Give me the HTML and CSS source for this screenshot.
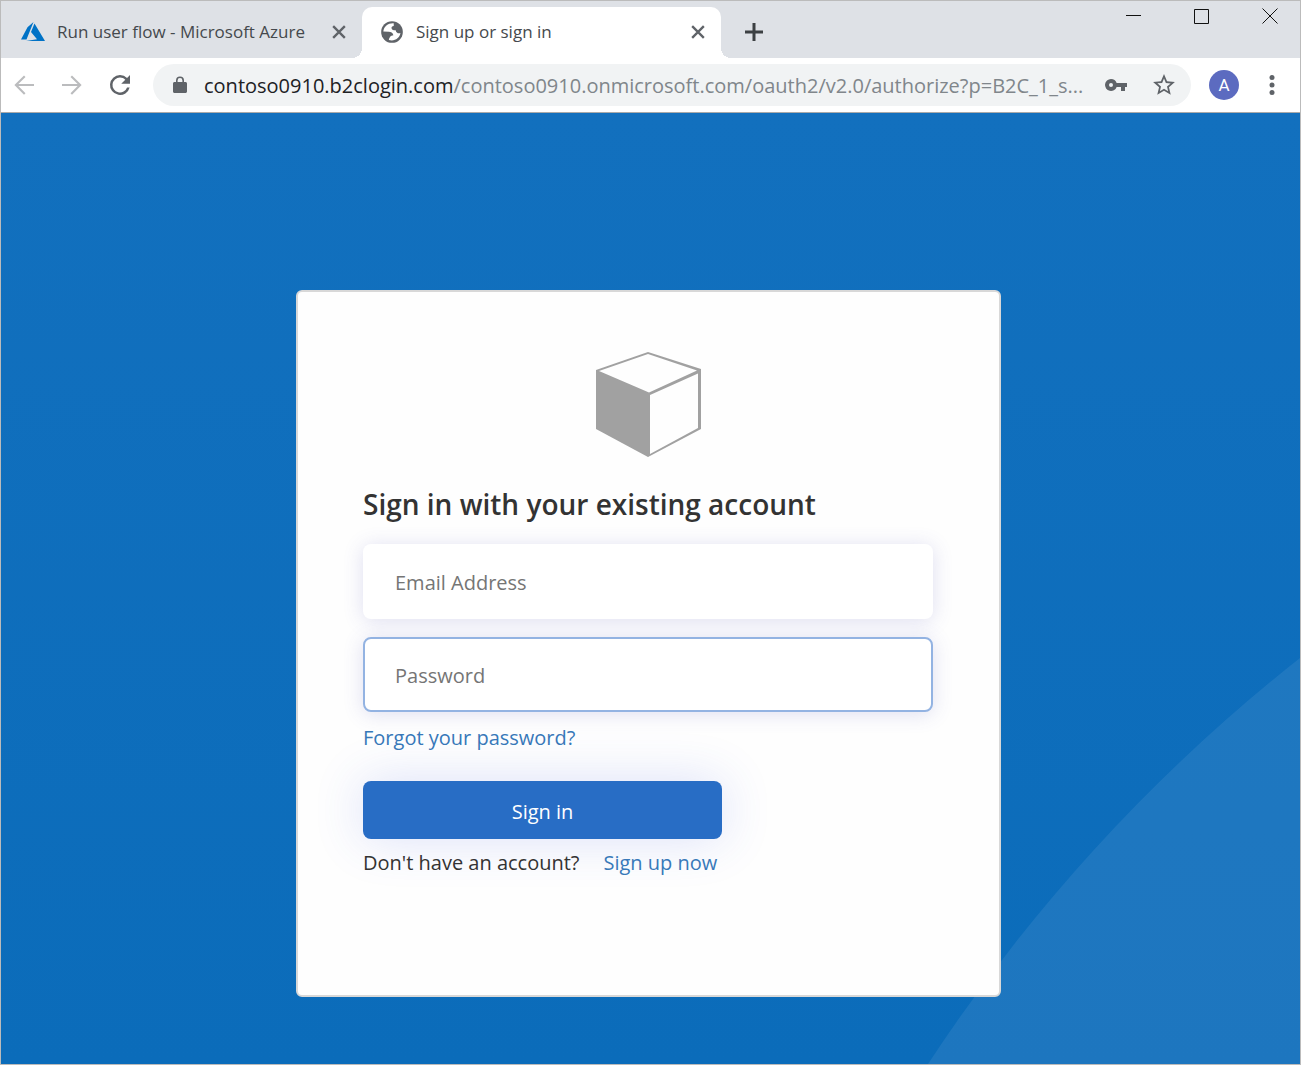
FILE: index.html
```html
<!DOCTYPE html>
<html lang="en">
<head>
<meta charset="utf-8">
<title>Sign up or sign in</title>
<link rel="stylesheet" href="styles.css">
</head>
<body>
<div class="window">
  <header class="chrome">
    <div class="tabs">
      <div class="tab">
        <svg class="favicon" viewBox="0 0 26 26"><path fill="#0072c6" d="M13.500 3 7.500 8.200 1 20.500h5.500zM14.500 4.500l-3.500 8.500 6 7.300-11 1.700h19z"/></svg>
        <span class="tab-title">Run user flow - Microsoft Azure</span>
        <button class="icon-button" aria-label="Close tab"><svg class="cross" viewBox="0 0 12 12"><path d="M1 1l10 10M11 1 1 11"/></svg></button>
      </div>
      <div class="tab tab-active">
        <svg class="favicon" viewBox="0 0 24 24"><circle cx="12" cy="12" r="10" fill="#5f6368"/><path fill="#fff" d="M13.600 3.900C8.500 3.600 4.500 6.500 4 11.500l5.100.2c2 .1 3.500.6 4.200 3.200-1.200.3-2.300.3-2.800 1.300-.5 1-1.400 1.800-1.400 3.200 5 1.500 10-1.400 10.700-6.400-1.800.6-4 0-4.400-2.600-1.500 0-3.200.1-3.700-1.300-.6-2 .6-2.500 1.900-2.700z"/></svg>
        <span class="tab-title">Sign up or sign in</span>
        <button class="icon-button" aria-label="Close tab"><svg class="cross" viewBox="0 0 12 12"><path d="M1 1l10 10M11 1 1 11"/></svg></button>
      </div>
      <button class="icon-button new-tab" aria-label="New tab"><svg class="plus" viewBox="0 0 18 18"><path d="M9 0v18M0 9h18"/></svg></button>
      <div class="window-controls">
        <button class="icon-button" aria-label="Minimize"><svg class="control" viewBox="0 0 16 16"><path d="M0 7.500h15"/></svg></button>
        <button class="icon-button" aria-label="Maximize"><svg class="control" viewBox="0 0 16 16"><path d="M.5 1.500h14v14H.5z"/></svg></button>
        <button class="icon-button" aria-label="Close"><svg class="control" viewBox="0 0 16 16"><path d="M.5.5l15 15M15.500.5l-15 15"/></svg></button>
      </div>
    </div>
    <div class="toolbar">
      <nav class="history">
        <button class="icon-button muted" aria-label="Back"><svg class="tool" viewBox="0 0 24 24"><path d="M20 11.200H7.500l5.700-5.700L12 4.300 4.300 12l7.700 7.700 1.200-1.200-5.700-5.700H20z"/></svg></button>
        <button class="icon-button muted" aria-label="Forward"><svg class="tool" viewBox="0 0 24 24"><path d="M4 11.200h12.500l-5.700-5.700L12 4.300l7.700 7.700-7.700 7.700-1.200-1.200 5.700-5.700H4z"/></svg></button>
        <button class="icon-button" aria-label="Reload"><svg class="tool" viewBox="0 0 24 24"><path d="M17.650 6.350A7.950 7.950 0 0 0 12 4a8 8 0 1 0 7.730 10h-2.080A6 6 0 1 1 12 6c1.660 0 3.140.69 4.220 1.780L13 11h7V4z"/></svg></button>
      </nav>
      <div class="address">
        <svg class="lock" viewBox="0 0 14 18"><path d="M12.500 6H11V4.500a4 4 0 0 0-8 0V6H1.500C.7 6 0 6.700 0 7.500v8c0 .8.7 1.500 1.500 1.500h11c.8 0 1.500-.7 1.500-1.500v-8c0-.8-.7-1.500-1.500-1.500zM4.600 6V4.500a2.400 2.400 0 0 1 4.800 0V6z"/></svg>
        <span class="url"><span class="host">contoso0910.b2clogin.com</span>/contoso0910.onmicrosoft.com/oauth2/v2.0/authorize?p=B2C_1_s...</span>
        <button class="icon-button" aria-label="Saved passwords"><svg class="small" viewBox="0 0 24 24"><path d="M12.650 10A6 6 0 0 0 7 6a6 6 0 1 0 5.650 8H17v4h4v-4h2v-4zM7 14a2 2 0 1 1 0-4 2 2 0 0 1 0 4z"/></svg></button>
        <button class="icon-button star" aria-label="Bookmark"><svg class="small" viewBox="0 0 22 22"><path d="M21 8.240l-7.190-.62L11 1 8.190 7.630 1 8.240l5.460 4.730L4.820 20 11 16.270 17.180 20l-1.630-7.030zM11 14.400l-3.760 2.270 1-4.280-3.320-2.880 4.380-.38L11 5.100l1.710 4.040 4.380.38-3.320 2.880 1 4.280z"/></svg></button>
      </div>
      <button class="avatar" aria-label="Account">A</button>
      <button class="icon-button" aria-label="Menu"><svg class="tool" viewBox="0 0 24 24"><circle cx="12" cy="6" r="2"/><circle cx="12" cy="12" r="2"/><circle cx="12" cy="18" r="2"/></svg></button>
    </div>
  </header>
  <main class="page">
    <svg class="arc" viewBox="0 0 372 406"><path d="M0 406Q153 173 372 0V406z"/></svg>
    <form class="card">
      <svg class="logo" viewBox="-1 0 106 106"><path fill="#a1a1a1" fill-rule="evenodd" d="M0 18 52 0l53 17v60L52 105 0 77zM3 19l50 21.500L101 18.500 52 2zM54 43v59L102 76V21.500z"/></svg>
      <h1 class="heading">Sign in with your existing account</h1>
      <input class="field" type="email" placeholder="Email Address" aria-label="Email Address">
      <input class="field field-focus" type="password" placeholder="Password" aria-label="Password">
      <a class="link" href="#forgot">Forgot your password?</a>
      <button class="submit" type="submit">Sign in</button>
      <p class="signup"><span>Don't have an account?</span><a class="link" href="#signup">Sign up now</a></p>
    </form>
  </main>
</div>
</body>
</html>
```
FILE: styles.css
```css
* {
  box-sizing: border-box;
}

body {
  margin: 0;
  font-family: "Segoe UI", "Open Sans", "Noto Sans", sans-serif;
  font-size: 20px;
  line-height: 28px;
  color: #333;
}

button,
input {
  font: inherit;
}

svg {
  display: block;
  flex: none;
}

.window {
  display: flex;
  flex-direction: column;
  min-height: 100vh;
  border: 1px solid #bbb;
}

.tabs {
  display: flex;
  height: 57px;
  padding-top: 6px;
  background: #dee1e6;
}

.tab {
  display: flex;
  align-items: center;
  flex: 0 1 361px;
  min-width: 0;
  padding: 0 16px 2px 19px;
  font-size: 17px;
  color: #45494d;
}

.tab-active {
  position: relative;
  flex-basis: 359px;
  padding: 0 16px 2px 17px;
  background: #fff;
  border-radius: 10px 10px 0 0;
}

.tab-active::before,
.tab-active::after {
  content: "";
  position: absolute;
  bottom: 0;
  width: 10px;
  height: 10px;
}

.tab-active::before {
  right: 100%;
  background: radial-gradient(circle at 0 0, transparent 10px, #fff 10px);
}

.tab-active::after {
  left: 100%;
  background: radial-gradient(circle at 100% 0, transparent 10px, #fff 10px);
}

.tab-title {
  flex: 1;
  margin-left: 11px;
  overflow: hidden;
  white-space: nowrap;
}

.favicon {
  width: 26px;
  height: 26px;
}

.icon-button {
  display: flex;
  flex: none;
  padding: 0;
  border: 0;
  background: none;
  fill: #5f6368;
}

.muted {
  fill: #bbbcbe;
}

.cross {
  width: 14px;
  height: 14px;
  stroke: #5f6368;
  stroke-width: 2;
}

.new-tab {
  align-self: center;
  margin-left: 24px;
  padding-bottom: 2px;
}

.plus {
  width: 18px;
  height: 18px;
  stroke: #3c4043;
  stroke-width: 3;
}

.window-controls {
  display: flex;
  gap: 52px;
  margin: 1px 22px 0 auto;
}

.control {
  width: 16px;
  height: 16px;
  fill: none;
  stroke: #111;
}

.toolbar {
  display: flex;
  align-items: center;
  height: 55px;
  padding: 0 13px 0 8px;
  background: #fff;
  border-bottom: 1px solid #aaa;
}

.history {
  display: flex;
  gap: 18px;
  margin-right: 18px;
}

.tool {
  width: 30px;
  height: 30px;
}

.small {
  width: 24px;
  height: 24px;
}

.address {
  display: flex;
  align-items: center;
  flex: 1;
  gap: 17px;
  min-width: 0;
  height: 42px;
  padding: 0 15px 0 20px;
  border-radius: 21px;
  background: #f1f3f4;
}

.lock {
  width: 14px;
  height: 18px;
  fill: #5f6368;
}

.url {
  flex: 1;
  padding-top: 1px;
  overflow: hidden;
  white-space: nowrap;
  color: #80868b;
}

.host {
  color: #202124;
}

.star {
  margin-left: 7px;
}

.avatar {
  width: 30px;
  height: 30px;
  margin: 0 18px;
  padding: 0;
  border: 0;
  border-radius: 50%;
  background: #5c6bc0;
  color: #fff;
  font-family: Roboto, sans-serif;
  font-size: 17px;
}

.page {
  position: relative;
  flex: 1;
  padding: 177px 4px 67px 0;
  overflow: hidden;
  background: linear-gradient(#1270be, #0b6cba);
}

.arc {
  position: absolute;
  right: 0;
  bottom: 0;
  width: 372px;
  height: 406px;
  fill: #fff;
  opacity: .07;
}

.card {
  position: relative;
  display: flex;
  flex-direction: column;
  align-items: flex-start;
  max-width: 705px;
  margin: 0 auto;
  padding: 60px 66px 118px 65px;
  border: 2px solid #d8d8d8;
  border-radius: 6px;
  background: #fefefe;
}

.logo {
  align-self: center;
  width: 106px;
  height: 106px;
}

.heading {
  margin: 26px 0 20px;
  font-size: 28px;
  line-height: 40px;
  font-weight: 600;
}

.field {
  width: 100%;
  height: 75px;
  margin-bottom: 18px;
  padding: 2px 30px 0;
  border: 2px solid transparent;
  border-radius: 8px;
  background: #fff;
  box-shadow: 0 2px 20px rgba(80, 80, 180, .18);
  outline: 0;
}

.field::placeholder {
  color: #757575;
}

.field-focus {
  margin-bottom: 12px;
  border-color: #93b3e2;
}

.link {
  color: #3879b9;
  text-decoration: none;
}

.submit {
  width: 63%;
  height: 58px;
  margin: 29px 0 10px;
  padding: 3px 0 0;
  border: 0;
  border-radius: 8px;
  background: #286dc5;
  box-shadow: 0 0 50px rgba(60, 90, 220, .18);
  color: #fff;
}

.signup {
  display: flex;
  gap: 24px;
  margin: 0;
}
```
